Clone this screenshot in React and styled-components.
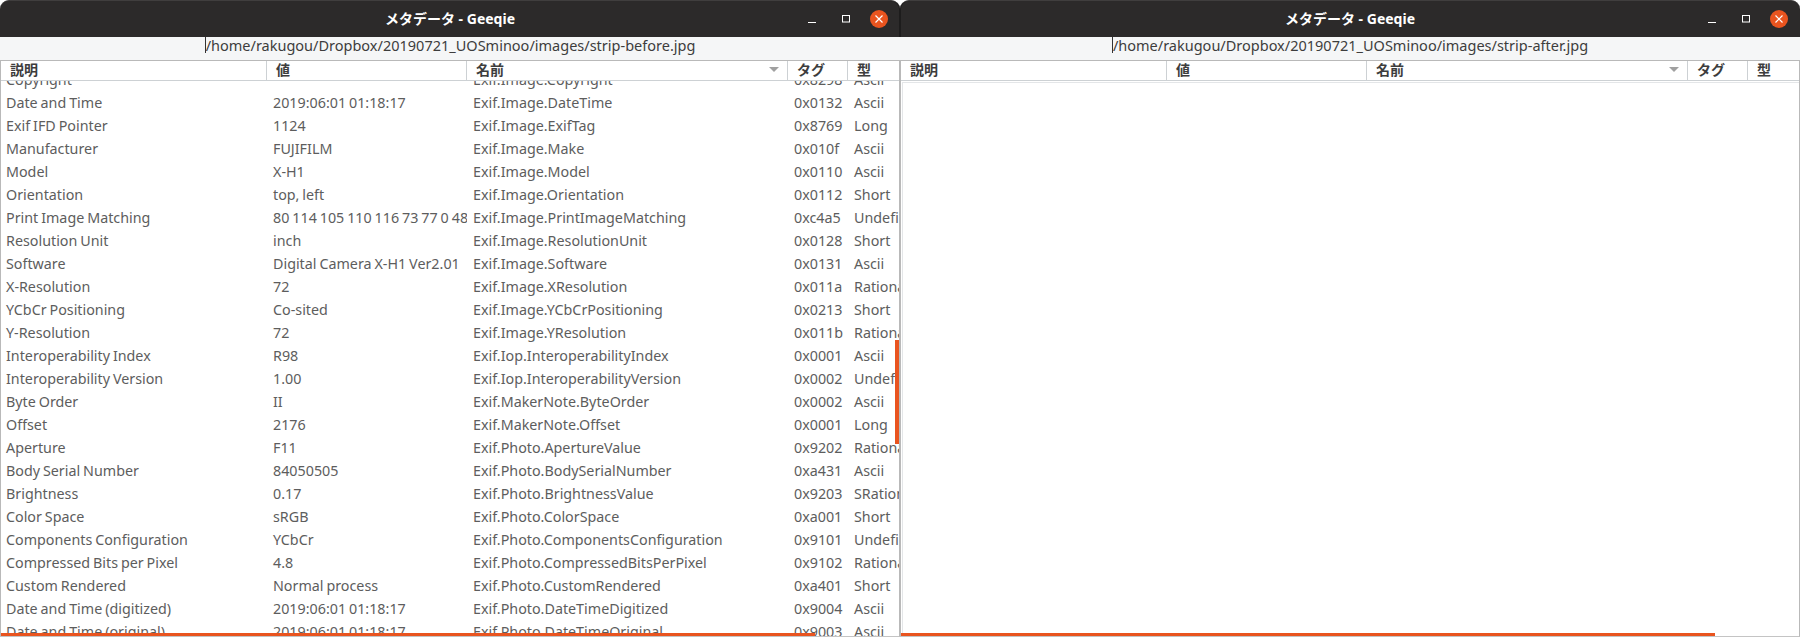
import React from 'react';
import styled, { createGlobalStyle } from 'styled-components';

const GlobalStyle = createGlobalStyle`
  html, body {
    margin: 0;
    padding: 0;
    background: #ffffff;
    overflow: hidden;
  }
`;

const FONT = `"Noto Sans", "Noto Sans CJK JP", sans-serif`;
const COLUMNS = '266px 200px 321px 60px 1fr';

const rows = [
  ['Copyright', '', 'Exif.Image.Copyright', '0x8298', 'Ascii'],
  ['Date and Time', '2019:06:01 01:18:17', 'Exif.Image.DateTime', '0x0132', 'Ascii'],
  ['Exif IFD Pointer', '1124', 'Exif.Image.ExifTag', '0x8769', 'Long'],
  ['Manufacturer', 'FUJIFILM', 'Exif.Image.Make', '0x010f', 'Ascii'],
  ['Model', 'X-H1', 'Exif.Image.Model', '0x0110', 'Ascii'],
  ['Orientation', 'top, left', 'Exif.Image.Orientation', '0x0112', 'Short'],
  ['Print Image Matching', '80 114 105 110 116 73 77 0 48 48', 'Exif.Image.PrintImageMatching', '0xc4a5', 'Undefined'],
  ['Resolution Unit', 'inch', 'Exif.Image.ResolutionUnit', '0x0128', 'Short'],
  ['Software', 'Digital Camera X-H1 Ver2.01', 'Exif.Image.Software', '0x0131', 'Ascii'],
  ['X-Resolution', '72', 'Exif.Image.XResolution', '0x011a', 'Rational'],
  ['YCbCr Positioning', 'Co-sited', 'Exif.Image.YCbCrPositioning', '0x0213', 'Short'],
  ['Y-Resolution', '72', 'Exif.Image.YResolution', '0x011b', 'Rational'],
  ['Interoperability Index', 'R98', 'Exif.Iop.InteroperabilityIndex', '0x0001', 'Ascii'],
  ['Interoperability Version', '1.00', 'Exif.Iop.InteroperabilityVersion', '0x0002', 'Undefined'],
  ['Byte Order', 'II', 'Exif.MakerNote.ByteOrder', '0x0002', 'Ascii'],
  ['Offset', '2176', 'Exif.MakerNote.Offset', '0x0001', 'Long'],
  ['Aperture', 'F11', 'Exif.Photo.ApertureValue', '0x9202', 'Rational'],
  ['Body Serial Number', '84050505', 'Exif.Photo.BodySerialNumber', '0xa431', 'Ascii'],
  ['Brightness', '0.17', 'Exif.Photo.BrightnessValue', '0x9203', 'SRational'],
  ['Color Space', 'sRGB', 'Exif.Photo.ColorSpace', '0xa001', 'Short'],
  ['Components Configuration', 'YCbCr', 'Exif.Photo.ComponentsConfiguration', '0x9101', 'Undefined'],
  ['Compressed Bits per Pixel', '4.8', 'Exif.Photo.CompressedBitsPerPixel', '0x9102', 'Rational'],
  ['Custom Rendered', 'Normal process', 'Exif.Photo.CustomRendered', '0xa401', 'Short'],
  ['Date and Time (digitized)', '2019:06:01 01:18:17', 'Exif.Photo.DateTimeDigitized', '0x9004', 'Ascii'],
  ['Date and Time (original)', '2019:06:01 01:18:17', 'Exif.Photo.DateTimeOriginal', '0x9003', 'Ascii'],
];

const Desktop = styled.div`
  display: grid;
  grid-template-columns: 900px 900px;
  width: 1800px;
  height: 637px;
  font-family: ${FONT};
`;

const Window = styled.div`
  display: flex;
  flex-direction: column;
  min-width: 0;
  height: 637px;
  overflow: hidden;
`;

const TitleBar = styled.div`
  position: relative;
  flex: none;
  height: 37px;
  box-sizing: border-box;
  padding-bottom: 3px;
  display: flex;
  align-items: center;
  justify-content: center;
  background: #2c2a2a;
  border-top: 1px solid #403e3e;
  border-radius: 9px 9px 0 0;
  box-shadow: inset ${({ $right }) => ($right ? '1px' : '-1px')} 0 0 #1d1c1c;
  color: #ffffff;
  font-size: 14px;
  font-weight: 700;
`;

const WindowButtons = styled.div`
  position: absolute;
  right: 12px;
  top: 9px;
  display: flex;
  align-items: center;
  gap: 14px;
`;

const WindowButton = styled.span`
  display: flex;
  align-items: center;
  justify-content: center;
  width: 20px;
  height: 18px;
  color: #ffffff;
`;

const CloseButton = styled.span`
  display: flex;
  align-items: center;
  justify-content: center;
  width: 18px;
  height: 18px;
  border-radius: 50%;
  background: #e9541f;
  color: #ffffff;
`;

const PathBar = styled.div`
  flex: none;
  height: 23px;
  display: flex;
  align-items: flex-start;
  justify-content: center;
  background: #f5f6f7;
  color: #3d3d3d;
  font-size: 14.5px;
`;

const PathText = styled.span`
  white-space: nowrap;
  border-left: 1px solid #333333;
  line-height: 16px;
`;

const Frame = styled.div`
  position: relative;
  flex: 1;
  min-height: 0;
  display: flex;
  flex-direction: column;
  border-top: 1px solid #b9b9b9;
  border-left: 1px solid #b9b9b9;
  border-right: 1px solid #b9b9b9;
  border-bottom: 1px solid #c4c4c4;
  overflow: hidden;
`;

const HeaderRow = styled.div`
  flex: none;
  display: grid;
  grid-template-columns: ${COLUMNS};
  height: 19px;
  box-sizing: content-box;
  background: #ffffff;
  border-bottom: 1px solid #cdd1d4;
`;

const HeaderCell = styled.div`
  display: flex;
  align-items: center;
  justify-content: space-between;
  padding: 0 8px 2px 9px;
  min-width: 0;
  border-right: ${({ $last }) => ($last ? 'none' : '1px solid #cdd1d4')};
  color: #3d3d3d;
  font-size: 14px;
  font-weight: 700;
  line-height: 16px;
  white-space: nowrap;
`;

const SortArrow = styled.span`
  width: 0;
  height: 0;
  border-left: 5px solid transparent;
  border-right: 5px solid transparent;
  border-top: 5px solid #a0a0a0;
`;

const Body = styled.div`
  flex: 1;
  min-height: 0;
  overflow: hidden;
  background: #ffffff;
`;

const RowList = styled.div`
  margin-top: -13px;
`;

const Row = styled.div`
  display: grid;
  grid-template-columns: ${COLUMNS};
  height: 23px;
  align-items: center;
`;

const Cell = styled.div`
  min-width: 0;
  padding-left: ${({ $first }) => ($first ? '5px' : '6px')};
  overflow: hidden;
  white-space: nowrap;
  color: #5d5d5d;
  font-size: 14.3px;
  word-spacing: -0.8px;
`;

const EmptyBody = styled.div`
  flex: 1;
  margin: 1px 0 0 1px;
  border-top: 1px solid #e4e6e8;
  border-left: 1px solid #e4e6e8;
  background: #ffffff;
`;

const ScrollMarkV = styled.div`
  position: absolute;
  top: 279px;
  right: 0;
  width: 4px;
  height: 104px;
  background: #e9541f;
`;

const ScrollMarkH = styled.div`
  position: absolute;
  left: 0;
  bottom: 0;
  width: ${({ $width }) => $width}px;
  height: 3px;
  background: #e9541f;
`;

const columnsHead = ['説明', '値', '名前', 'タグ', '型'];

const MetaWindow = ({ path, right, children, barWidth }) => (
  <Window>
    <TitleBar $right={right}>
      メタデータ - Geeqie
      <WindowButtons>
        <WindowButton>
          <svg width="10" height="10" viewBox="0 0 10 10">
            <path d="M1 8.5h8" stroke="currentColor" strokeWidth="1" fill="none" />
          </svg>
        </WindowButton>
        <WindowButton>
          <svg width="10" height="10" viewBox="0 0 10 10">
            <rect x="1.5" y="1.5" width="7" height="6.5" stroke="currentColor" strokeWidth="1" fill="none" />
          </svg>
        </WindowButton>
        <CloseButton>
          <svg width="10" height="10" viewBox="0 0 10 10">
            <path d="M1.5 1.5l7 7M8.5 1.5l-7 7" stroke="currentColor" strokeWidth="1.2" fill="none" />
          </svg>
        </CloseButton>
      </WindowButtons>
    </TitleBar>
    <PathBar>
      <PathText>{path}</PathText>
    </PathBar>
    <Frame>
      <HeaderRow>
        {columnsHead.map((label, i) => (
          <HeaderCell key={label} $last={i === 4}>
            {label}
            {i === 2 && <SortArrow />}
          </HeaderCell>
        ))}
      </HeaderRow>
      {children}
      <ScrollMarkH $width={barWidth} />
    </Frame>
  </Window>
);

const App = () => {
  return (
    <>
      <GlobalStyle />
      <Desktop>
        <MetaWindow path="/home/rakugou/Dropbox/20190721_UOSminoo/images/strip-before.jpg" barWidth={814}>
          <Body>
            <RowList>
              {rows.map((row) => (
                <Row key={row[2]}>
                  {row.map((text, i) => (
                    <Cell key={i} $first={i === 0}>{text}</Cell>
                  ))}
                </Row>
              ))}
            </RowList>
          </Body>
          <ScrollMarkV />
        </MetaWindow>
        <MetaWindow right path="/home/rakugou/Dropbox/20190721_UOSminoo/images/strip-after.jpg" barWidth={814}>
          <EmptyBody />
        </MetaWindow>
      </Desktop>
    </>
  );
};

export default App;
